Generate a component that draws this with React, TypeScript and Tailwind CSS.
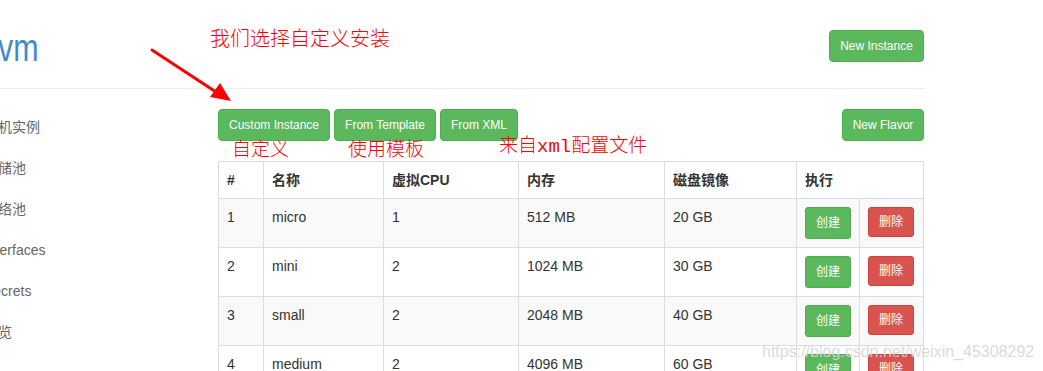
import React from "react";

const rows = [
  { id: 1, name: "micro", cpu: 1, mem: "512 MB", disk: "20 GB" },
  { id: 2, name: "mini", cpu: 2, mem: "1024 MB", disk: "30 GB" },
  { id: 3, name: "small", cpu: 2, mem: "2048 MB", disk: "40 GB" },
  { id: 4, name: "medium", cpu: 2, mem: "4096 MB", disk: "60 GB" },
];

const nav = ["主机实例", "存储池", "网络池", "Interfaces", "Secrets", "概览"];

function GreenBtn({ children, className = "" }: { children: React.ReactNode; className?: string }) {
  return (
    <button
      className={
        "h-[32px] px-0 whitespace-nowrap rounded-[4px] bg-[#5cb85c] border border-[#4cae4c] text-white text-[12px] leading-none " +
        className
      }
    >
      {children}
    </button>
  );
}

export default function App() {
  return (
    <div className="relative w-[1043px] h-[371px] overflow-hidden bg-white font-['Liberation_Sans','Noto_Sans_CJK_SC',sans-serif] text-[#333]">
      <div className="w-[924px]">
        <header className="h-[89px] border-b border-[#eee] flex justify-between items-start">
          <div className="mt-[29px] -ml-[2px] inline-block origin-left scale-x-[0.8] text-[38px] leading-[38px] text-[#428bca]">
            vm
          </div>
          <GreenBtn className="mt-[30px] w-[95px]">New Instance</GreenBtn>
        </header>
        <div className="flex">
          <nav className="w-[219px] pt-[18px]">
            <ul className="-ml-[16px]">
              {nav.map((n) => (
                <li key={n} className="h-[41px] flex items-center text-[14px] text-[#666]">
                  {n}
                </li>
              ))}
            </ul>
          </nav>
          <main className="flex-1 pt-[20px]">
            <div className="flex justify-between">
              <div className="flex gap-[4px]">
                <GreenBtn className="w-[112px]">Custom Instance</GreenBtn>
                <GreenBtn className="w-[102px]">From Template</GreenBtn>
                <GreenBtn className="w-[78px]">From XML</GreenBtn>
              </div>
              <GreenBtn className="w-[82px]">New Flavor</GreenBtn>
            </div>
            <table className="mt-[20px] w-[705px] table-fixed border-collapse text-[14px] leading-[20px]">
              <colgroup>
                <col className="w-[45px]" />
                <col className="w-[120px]" />
                <col className="w-[135px]" />
                <col className="w-[146px]" />
                <col className="w-[132px]" />
                <col className="w-[63px]" />
                <col className="w-[64px]" />
              </colgroup>
              <thead>
                <tr className="text-left font-bold">
                  <th className="border border-[#ddd] p-[8px]">#</th>
                  <th className="border border-[#ddd] p-[8px]">名称</th>
                  <th className="border border-[#ddd] p-[8px]">虚拟CPU</th>
                  <th className="border border-[#ddd] p-[8px]">内存</th>
                  <th className="border border-[#ddd] p-[8px]">磁盘镜像</th>
                  <th className="border border-[#ddd] p-[8px]" colSpan={2}>执行</th>
                </tr>
              </thead>
              <tbody>
                {rows.map((r, i) => (
                  <tr key={r.id} className={i % 2 === 0 ? "bg-[#f9f9f9]" : "bg-white"}>
                    <td className="border border-[#ddd] p-[8px] align-top">{r.id}</td>
                    <td className="border border-[#ddd] p-[8px] align-top">{r.name}</td>
                    <td className="border border-[#ddd] p-[8px] align-top">{r.cpu}</td>
                    <td className="border border-[#ddd] p-[8px] align-top">{r.mem}</td>
                    <td className="border border-[#ddd] p-[8px] align-top">{r.disk}</td>
                    <td className="border border-[#ddd] p-[8px] align-top">
                      <button className="block h-[32px] w-[46px] rounded-[3px] bg-[#5cb85c] border border-[#4cae4c] text-white text-[12px] leading-none">
                        创建
                      </button>
                    </td>
                    <td className="border border-[#ddd] p-[8px] align-top">
                      <button className="block h-[30px] w-[46px] rounded-[3px] bg-[#d9534f] border border-[#d43f3a] text-white text-[12px] leading-none">
                        删除
                      </button>
                    </td>
                  </tr>
                ))}
              </tbody>
            </table>
          </main>
        </div>
      </div>

      {/* annotations */}
      <div className="absolute left-[210px] top-[26px] text-[20px] leading-[24px] text-[#ff0000] font-['Noto_Sans_CJK_SC',sans-serif] font-light">
        我们选择自定义安装
      </div>
      <div className="absolute left-[232px] top-[137px] text-[19px] leading-[22px] text-[#ff0000] font-['Noto_Sans_CJK_SC',sans-serif] font-light">
        自定义
      </div>
      <div className="absolute left-[348px] top-[137px] text-[19px] leading-[22px] text-[#ff0000] font-['Noto_Sans_CJK_SC',sans-serif] font-light">
        使用模板
      </div>
      <div className="absolute left-[499px] top-[133px] text-[19px] leading-[22px] text-[#ff0000] font-['Noto_Sans_CJK_SC',sans-serif] font-light">
        来自<span className="font-['Liberation_Mono',monospace] text-[19px]">xml</span>配置文件
      </div>
      <svg className="absolute left-0 top-0" width="1043" height="371" viewBox="0 0 1043 371">
        <line x1="152" y1="50" x2="216" y2="92" stroke="#ff0000" strokeWidth="3" strokeLinecap="round" />
        <polygon points="231,101 210,97 220,83" fill="#ff0000" />
      </svg>
      <div className="absolute left-[762px] top-[342px] text-[16px] leading-[20px] text-[#d6d6d6]/90 font-['Liberation_Sans',sans-serif]">
        https://blog.csdn.net/weixin_45308292
      </div>
    </div>
  );
}
